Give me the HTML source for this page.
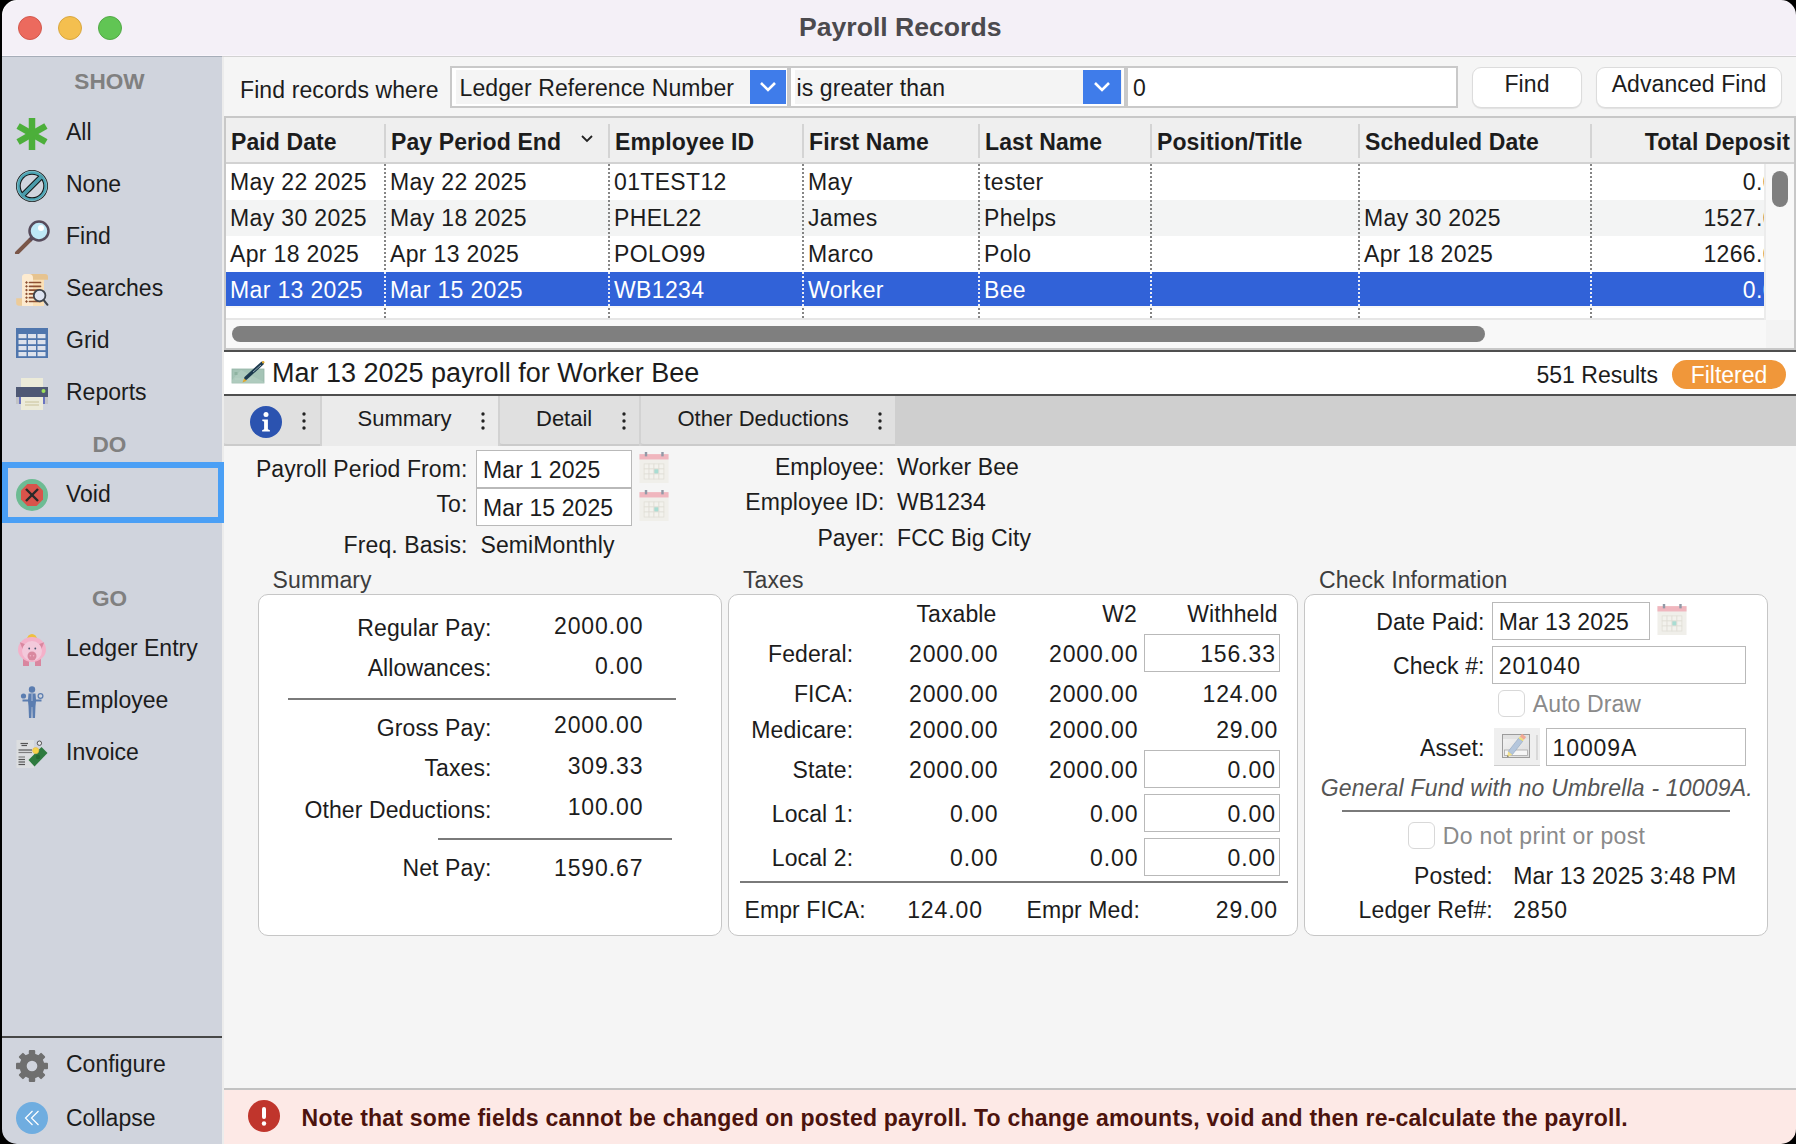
<!DOCTYPE html>
<html><head><meta charset="utf-8">
<style>
*{margin:0;padding:0;box-sizing:border-box}
html,body{width:1796px;height:1144px;overflow:hidden;background:#000}
body{position:relative;font-family:"Liberation Sans",sans-serif;color:#1c1c1c}
.win{position:absolute;left:0;top:0;width:1796px;height:1144px;overflow:hidden;background:#f5f5f5}
.t{position:absolute;white-space:nowrap;font-size:23px;line-height:24.4px;letter-spacing:0.1px}
.r{text-align:right}
.b{font-weight:bold}
.abs{position:absolute}
#titlebar{position:absolute;left:0;top:0;width:1796px;height:56px;z-index:5;background:#f4f0f7;border-bottom:1px solid #faf6fc}
#tline{position:absolute;left:0;top:56px;width:1796px;height:1px;background:#d2d2d2;z-index:5}
#tline2{position:absolute;left:0;top:56px;width:222px;height:1px;background:#a6adb8;z-index:6}
.light{position:absolute;top:16px;width:24px;height:24px;border-radius:50%}
#sidebar{position:absolute;left:0;top:0;width:222px;height:1144px;background:#d0d4dd}
#lstrip{position:absolute;left:0;top:0;width:2px;height:1144px;background:#000;z-index:10}
.sh{position:absolute;left:0;width:219px;text-align:center;font-weight:bold;color:#808080;font-size:22.6px;line-height:22px}
.si{position:absolute;left:66px;font-size:23px;line-height:24.6px;white-space:nowrap;color:#1c1c1c}
.ico{position:absolute;left:14px;width:34px;height:34px}

#main{position:absolute;left:222px;top:57px;width:1574px;height:1087px;background:#f5f5f5;border-left:2px solid #ececec}
.dd{position:absolute;top:66px;height:42px;border:2px solid #c9c9c9;background:#fff}
.dd .in{position:absolute;left:4px;top:2px;right:2px;bottom:2px;background:#f4f4f4}
.dd .bt{position:absolute;top:2px;width:36px;height:34px;background:#3f7cea}
.btn{position:absolute;top:67px;height:41px;background:#fff;border:1px solid #dcdcdc;border-radius:9px;box-shadow:0 1px 1px rgba(0,0,0,0.08)}
.tb{position:absolute;left:224px;top:116px;width:1572px;height:234px;border:2px solid #c8c8c8;border-right:2px solid #c8c8c8;background:#f8f8f8;overflow:hidden}
.hdr{position:absolute;left:0;top:0;width:1570px;height:46px;background:#efefef;border-bottom:2px solid #d2d2d2}
.row{position:absolute;left:0;width:1538px;height:36px;background:#fff;overflow:hidden}
.row .t{letter-spacing:0.35px}
.row.alt{background:#f3f4f4}
.row.sel{background:#3162d8;color:#fff}
.vsep{position:absolute;top:6px;width:2px;height:34px;background:#d4d4d4}
.dsep{position:absolute;top:46px;width:2px;height:156px;background-image:linear-gradient(#777 50%, transparent 50%);background-size:2px 4px;opacity:0.9}

.inp{position:absolute;background:#fff;border:1px solid #b9b9b9}
.grp{position:absolute;top:594px;height:342px;background:#fff;border:1.5px solid #c6c6c6;border-radius:10px}
.gl{color:#3d3d3d}
.cal{position:absolute;width:30px;height:31px}
.cb{position:absolute;width:27px;height:27px;border:1px solid #d8d8d8;border-radius:6px;background:#fff}
.hl{position:absolute;height:2px;background:#7a7a7a}
</style></head>
<body>
<div class="win">
  <div id="lstrip"></div>
<svg class="abs" style="left:0;top:0;z-index:30" width="1796" height="1144" viewBox="0 0 1796 1144">
  <path d="M0,0 L17,0 A15,15 0 0 0 2,15 L2,15 L0,15 Z" fill="#000"/>
  <path d="M17,0.6 A15,15 0 0 0 2.6,15" fill="none" stroke="#fff" stroke-width="1" opacity="0.7"/>
  <path d="M1796,0 L1781,0 A15,15 0 0 1 1796,15 Z" fill="#000"/>
  <path d="M0,1144 L0,1129 L2,1129 A15,15 0 0 0 17,1144 Z" fill="#000"/>
  <path d="M1796,1144 L1796,1129 A15,15 0 0 1 1781,1144 Z" fill="#000"/>
</svg>
  <div id="tline"></div><div id="tline2"></div>
  <div id="titlebar">
    <div class="light" style="left:18px;background:#ec6a5e;border:1px solid #d3584d"></div>
    <div class="light" style="left:58px;background:#f4bf4f;border:1px solid #d9a73f"></div>
    <div class="light" style="left:98px;background:#61c554;border:1px solid #52a947"></div>
    <div class="t b" style="left:799px;top:13.6px;font-size:26.6px;line-height:26.6px;color:#4b4a4e;letter-spacing:0">Payroll Records</div>
  </div>

  <div id="sidebar">
    <div class="sh" style="top:71px">SHOW</div>
    <svg class="abs" style="left:14px;top:116px" width="36" height="36" viewBox="0 0 36 36">
      <g stroke="#4caf3a" stroke-width="6.5" stroke-linecap="butt">
        <line x1="18" y1="2" x2="18" y2="34"/>
        <line x1="4.1" y1="10" x2="31.9" y2="26"/>
        <line x1="4.1" y1="26" x2="31.9" y2="10"/>
      </g>
    </svg>
    <div class="si" style="top:120px">All</div>
    <svg class="abs" style="left:14px;top:168px" width="36" height="36" viewBox="0 0 36 36">
      <defs><clipPath id="cin"><circle cx="18" cy="18" r="12"/></clipPath><clipPath id="cout"><circle cx="18" cy="18" r="14.6"/></clipPath></defs>
      <circle cx="18" cy="18" r="16" fill="#111"/>
      <circle cx="18" cy="18" r="15" fill="#4ea5b5"/>
      <circle cx="18" cy="18" r="15" fill="none" stroke="#bff0f6" stroke-width="0.9" opacity="0.55"/>
      <circle cx="18" cy="18" r="12.3" fill="#111"/>
      <circle cx="18" cy="18" r="11.3" fill="#d0d4dd"/>
      <line x1="5" y1="31" x2="31" y2="5" stroke="#111" stroke-width="5.6" clip-path="url(#cin)"/>
      <line x1="5" y1="31" x2="31" y2="5" stroke="#4a9cab" stroke-width="3.8" clip-path="url(#cout)"/>
    </svg>
    <div class="si" style="top:172px">None</div>
    <svg class="abs" style="left:14px;top:218px" width="36" height="36" viewBox="0 0 36 36">
      <line x1="3" y1="35" x2="16" y2="22" stroke="#7a5648" stroke-width="4" stroke-linecap="round"/>
      <line x1="16" y1="22" x2="19" y2="19" stroke="#5c4a55" stroke-width="4"/>
      <circle cx="25" cy="13" r="9.5" fill="#bfe8f6" stroke="#574c5c" stroke-width="2.5"/>
      <circle cx="27" cy="10" r="3" fill="#fff"/>
    </svg>
    <div class="si" style="top:224px">Find</div>
    <svg class="abs" style="left:14px;top:272px" width="36" height="36" viewBox="0 0 36 36">
      <path d="M8,6 Q8,2 12,2 L30,2 L30,34 L8,34 Z" fill="#fdebd0"/>
      <rect x="19" y="7" width="11" height="27" fill="#fbe0b6"/>
      <path d="M12,2 L31,2 Q34,2 34,5 L34,7.7 L19,7.7 L19,6 Q19,2 15,2 Z" fill="#e6c38f"/>
      <path d="M12,2 Q16.5,2 16.5,6 L16.5,7.7 L8,7.7 L8,6 Q8,2 12,2 Z" fill="#fdebd0"/>
      <path d="M2.2,26.3 L8,26.3 L8,33.8 L5,33.8 Q2.2,33.8 2.2,31 Z" fill="#edcb98"/>
      <rect x="11.5" y="9.5" width="2" height="2" fill="#8c4f32" transform="rotate(45 12.5 10.5)"/><rect x="11.5" y="13.3" width="2" height="2" fill="#8c4f32" transform="rotate(45 12.5 14.3)"/><rect x="11.5" y="17.1" width="2" height="2" fill="#8c4f32" transform="rotate(45 12.5 18.1)"/><rect x="11.5" y="20.9" width="2" height="2" fill="#8c4f32" transform="rotate(45 12.5 21.9)"/><rect x="11.5" y="24.7" width="2" height="2" fill="#8c4f32" transform="rotate(45 12.5 25.7)"/><rect x="11.5" y="28.5" width="2" height="2" fill="#8c4f32" transform="rotate(45 12.5 29.5)"/><line x1="15.5" y1="10.5" x2="26.5" y2="10.5" stroke="#8c4f32" stroke-width="1.7" stroke-linecap="round"/><line x1="15.5" y1="14.3" x2="26.5" y2="14.3" stroke="#8c4f32" stroke-width="1.7" stroke-linecap="round"/><line x1="15.5" y1="18.1" x2="26.5" y2="18.1" stroke="#8c4f32" stroke-width="1.7" stroke-linecap="round"/><line x1="15.5" y1="21.9" x2="26.5" y2="21.9" stroke="#8c4f32" stroke-width="1.7" stroke-linecap="round"/><line x1="15.5" y1="25.7" x2="26.5" y2="25.7" stroke="#8c4f32" stroke-width="1.7" stroke-linecap="round"/><line x1="15.5" y1="29.5" x2="26.5" y2="29.5" stroke="#8c4f32" stroke-width="1.7" stroke-linecap="round"/>
      <circle cx="25.6" cy="23.6" r="5.8" fill="#dde3f0" stroke="#40454d" stroke-width="1.8"/>
      <line x1="29.6" y1="28" x2="33.5" y2="32.8" stroke="#40454d" stroke-width="2" stroke-linecap="round"/>
    </svg>
    <div class="si" style="top:276px">Searches</div>
    <svg class="abs" style="left:14px;top:326px" width="36" height="36" viewBox="0 0 36 36">
      <rect x="2" y="2" width="32" height="30" fill="#4f76ad"/>
      <g fill="#dde2ec">
        <rect x="4.5" y="8" width="8" height="4.2"/><rect x="14" y="8" width="8" height="4.2"/><rect x="23.5" y="8" width="8" height="4.2"/>
        <rect x="4.5" y="14" width="8" height="4.2"/><rect x="14" y="14" width="8" height="4.2"/><rect x="23.5" y="14" width="8" height="4.2"/>
        <rect x="4.5" y="20" width="8" height="4.2"/><rect x="14" y="20" width="8" height="4.2"/><rect x="23.5" y="20" width="8" height="4.2"/>
        <rect x="4.5" y="26" width="8" height="4.2"/><rect x="14" y="26" width="8" height="4.2"/><rect x="23.5" y="26" width="8" height="4.2"/>
      </g>
    </svg>
    <div class="si" style="top:328px">Grid</div>
    <svg class="abs" style="left:14px;top:376px" width="36" height="36" viewBox="0 0 36 36">
      <rect x="7" y="2" width="22" height="10" fill="#ecebd9"/>
      <rect x="2" y="11" width="32" height="10" fill="#4e5874"/>
      <rect x="2" y="21" width="4" height="7" fill="#c2c3c6"/><rect x="30" y="21" width="4" height="7" fill="#c2c3c6"/>
      <rect x="5" y="21" width="2" height="7" fill="#6a74c2"/><rect x="29" y="21" width="2" height="7" fill="#6a74c2"/>
      <rect x="7" y="21" width="22" height="13" fill="#ecebd9"/>
      <line x1="11" y1="26" x2="25" y2="26" stroke="#c9c29a" stroke-width="1"/>
      <line x1="11" y1="29" x2="25" y2="29" stroke="#c9c29a" stroke-width="1"/>
      <circle cx="29.5" cy="15" r="2" fill="#9ee05a"/>
    </svg>
    <div class="si" style="top:380px">Reports</div>
    <div class="sh" style="top:434px">DO</div>
    <div class="abs" style="left:2px;top:462px;width:222px;height:61px;border:6px solid #4a9ff5;z-index:4"></div>
    <svg class="abs" style="left:14px;top:477px" width="36" height="36" viewBox="0 0 36 36">
      <circle cx="18" cy="18" r="16" fill="#6dbb93"/>
      <polygon points="13.4,7 22.6,7 29,13.4 29,22.6 22.6,29 13.4,29 7,22.6 7,13.4" fill="#d9534b"/>
      <g stroke="#2a2a2a" stroke-width="2.4"><line x1="12" y1="12" x2="24" y2="24"/><line x1="24" y1="12" x2="12" y2="24"/></g>
    </svg>
    <div class="si" style="top:482px">Void</div>
    <div class="sh" style="top:588px">GO</div>
    <svg class="abs" style="left:14px;top:632px" width="36" height="36" viewBox="0 0 36 36">
      <path d="M13,7.5 A5,5.5 0 0 1 23,7.5 Z" fill="#eec040"/>
      <rect x="9" y="26" width="6" height="8" fill="#d9869f"/><rect x="21" y="26" width="6" height="8" fill="#d9869f"/>
      <ellipse cx="18" cy="17.5" rx="14" ry="12.5" fill="#f4b1c9"/>
      <polygon points="5.8,10.2 12,12.5 8.5,17" fill="#d9879f"/><polygon points="30.2,10.2 24,12.5 27.5,17" fill="#d9879f"/>
      <circle cx="18" cy="19" r="10" fill="#f3c9db"/>
      <circle cx="18" cy="24" r="4.5" fill="#d9889f"/>
      <circle cx="16.4" cy="23.7" r="0.8" fill="#f0b0c4"/><circle cx="19.6" cy="23.7" r="0.8" fill="#f0b0c4"/>
      <circle cx="15.2" cy="16.5" r="0.9" fill="#4d5570"/><circle cx="21.3" cy="16.5" r="0.9" fill="#4d5570"/>
    </svg>
    <div class="si" style="top:636px">Ledger Entry</div>
    <svg class="abs" style="left:14px;top:683px" width="36" height="36" viewBox="0 0 36 36">
      <g fill="#5b7db0">
        <circle cx="18" cy="6.5" r="3.2"/>
        <path d="M14.5,10.5 L21.5,10.5 L22,16.5 L27.5,16.5 L27.5,18.5 L22,18.5 L21.5,23 L21,35 L18.6,35 L18.3,24 L17.7,24 L17.4,35 L15,35 L14.5,23 L14,18.5 L8.5,18.5 L8.5,16.5 L14,16.5 Z"/>
        <circle cx="9.5" cy="13" r="2.6"/>
      </g>
      <circle cx="26.5" cy="13" r="2.4" fill="none" stroke="#5b7db0" stroke-width="1.2"/>
      <line x1="18" y1="11" x2="18" y2="18" stroke="#c8d2e6" stroke-width="0.8"/>
    </svg>
    <div class="si" style="top:688px">Employee</div>
    <svg class="abs" style="left:14px;top:734px" width="36" height="36" viewBox="0 0 36 36">
      <rect x="2.5" y="6" width="17.5" height="28" fill="#dcdee0"/>
      <g stroke="#555" stroke-width="1.2">
        <line x1="6.5" y1="9.5" x2="14" y2="9.5"/><line x1="7.5" y1="11.5" x2="13" y2="11.5"/><line x1="4.5" y1="16" x2="18" y2="16"/><line x1="4.5" y1="18.5" x2="18" y2="18.5" opacity="0.7"/>
        <line x1="4.5" y1="23" x2="11" y2="23" opacity="0.7"/><line x1="4.5" y1="25.5" x2="11" y2="25.5"/><line x1="4.5" y1="28" x2="11" y2="28"/><line x1="4.5" y1="30.5" x2="11" y2="30.5"/>
      </g>
      <polygon points="14.5,26 27.5,13 33.5,19 20.5,32.5" fill="#2e7a3e"/>
      <circle cx="24" cy="23" r="2.2" fill="#256a32"/>
      <circle cx="21.7" cy="16.6" r="3.1" fill="#f6d448" stroke="#e8b84a" stroke-width="0.6"/>
      <circle cx="25.4" cy="9.2" r="2.2" fill="#e8e8e8" stroke="#555" stroke-width="1"/>
    </svg>
    <div class="si" style="top:740px">Invoice</div>
    <div class="abs" style="left:0;top:1036px;width:222px;height:2px;background:#474747"></div>
    <svg class="abs" style="left:14px;top:1048px" width="36" height="36" viewBox="0 0 36 36">
      <g fill="#6f6f6f" transform="translate(18,18)">
        <circle r="12.5"/>
        <rect x="-3.2" y="-16" width="6.4" height="32" rx="1"/>
        <rect x="-3.2" y="-16" width="6.4" height="32" rx="1" transform="rotate(45)"/>
        <rect x="-3.2" y="-16" width="6.4" height="32" rx="1" transform="rotate(90)"/>
        <rect x="-3.2" y="-16" width="6.4" height="32" rx="1" transform="rotate(135)"/>
      </g>
      <circle cx="18" cy="18" r="5.3" fill="#d0d4dd"/>
    </svg>
    <div class="si" style="top:1052px">Configure</div>
    <svg class="abs" style="left:14px;top:1100px" width="36" height="36" viewBox="0 0 36 36">
      <circle cx="18" cy="18" r="16" fill="#6fade0"/>
      <g fill="none" stroke="#fff" stroke-width="1.2"><polyline points="18.5,11 11.5,18 18.5,25"/><polyline points="24.5,11 17.5,18 24.5,25"/></g>
    </svg>
    <div class="si" style="top:1106px">Collapse</div>
  </div>


  <div id="main"></div>
  <div class="t" style="left:240px;top:77.5px">Find records where</div>
  <div class="dd" style="left:450px;width:339px"><div class="in"></div><div class="bt" style="left:298px"></div></div>
  <div class="t" style="left:459.5px;top:75.5px">Ledger Reference Number</div>
  <svg class="abs" style="left:758px;top:80px" width="20" height="14" viewBox="0 0 20 14"><polyline points="3,3 10,10 17,3" fill="none" stroke="#fff" stroke-width="2.6"/></svg>
  <div class="dd" style="left:789px;width:337px"><div class="in"></div><div class="bt" style="left:292px;width:38px"></div></div>
  <div class="t" style="left:796.5px;top:75.5px">is greater than</div>
  <svg class="abs" style="left:1092px;top:80px" width="20" height="14" viewBox="0 0 20 14"><polyline points="3,3 10,10 17,3" fill="none" stroke="#fff" stroke-width="2.6"/></svg>
  <div class="abs" style="left:1126px;top:66px;width:332px;height:42px;border:2px solid #c9c9c9;background:#fff"></div>
  <div class="t" style="left:1133px;top:75.5px">0</div>
  <div class="btn" style="left:1472px;width:110px"></div>
  <div class="t" style="left:1472px;width:110px;text-align:center;top:71.5px">Find</div>
  <div class="btn" style="left:1596px;width:186px"></div>
  <div class="t" style="left:1596px;width:186px;text-align:center;top:71.5px">Advanced Find</div>

  <div class="tb">
    <div class="hdr">
      <div class="t b" style="left:5px;top:11.9px">Paid Date</div>
      <div class="vsep" style="left:158px"></div>
      <div class="t b" style="left:165px;top:11.9px">Pay Period End</div>
      <svg class="abs" style="left:354px;top:16px" width="14" height="10" viewBox="0 0 14 10"><polyline points="2,2 7,7 12,2" fill="none" stroke="#222" stroke-width="1.8"/></svg>
      <div class="vsep" style="left:382px"></div>
      <div class="t b" style="left:389px;top:11.9px">Employee ID</div>
      <div class="vsep" style="left:576px"></div>
      <div class="t b" style="left:583px;top:11.9px">First Name</div>
      <div class="vsep" style="left:752px"></div>
      <div class="t b" style="left:759px;top:11.9px">Last Name</div>
      <div class="vsep" style="left:924px"></div>
      <div class="t b" style="left:931px;top:11.9px">Position/Title</div>
      <div class="vsep" style="left:1132px"></div>
      <div class="t b" style="left:1139px;top:11.9px">Scheduled Date</div>
      <div class="vsep" style="left:1364px"></div>
      <div class="t b r" style="right:6px;top:11.9px">Total Deposit</div>
    </div>
    <div class="row " style="top:46px;height:36px"><div class="t" style="left:4px;top:5.9px">May 22 2025</div><div class="t" style="left:164px;top:5.9px">May 22 2025</div><div class="t" style="left:388px;top:5.9px">01TEST12</div><div class="t" style="left:582px;top:5.9px">May</div><div class="t" style="left:758px;top:5.9px">tester</div><div class="t r" style="left:1363px;width:200px;top:5.9px">0.00</div></div>
    <div class="row alt" style="top:82px;height:36px"><div class="t" style="left:4px;top:5.9px">May 30 2025</div><div class="t" style="left:164px;top:5.9px">May 18 2025</div><div class="t" style="left:388px;top:5.9px">PHEL22</div><div class="t" style="left:582px;top:5.9px">James</div><div class="t" style="left:758px;top:5.9px">Phelps</div><div class="t" style="left:1138px;top:5.9px">May 30 2025</div><div class="t r" style="left:1363px;width:200px;top:5.9px">1527.00</div></div>
    <div class="row " style="top:118px;height:36px"><div class="t" style="left:4px;top:5.9px">Apr 18 2025</div><div class="t" style="left:164px;top:5.9px">Apr 13 2025</div><div class="t" style="left:388px;top:5.9px">POLO99</div><div class="t" style="left:582px;top:5.9px">Marco</div><div class="t" style="left:758px;top:5.9px">Polo</div><div class="t" style="left:1138px;top:5.9px">Apr 18 2025</div><div class="t r" style="left:1363px;width:200px;top:5.9px">1266.00</div></div>
    <div class="row sel" style="top:154px;height:34px"><div class="t" style="left:4px;top:5.9px">Mar 13 2025</div><div class="t" style="left:164px;top:5.9px">Mar 15 2025</div><div class="t" style="left:388px;top:5.9px">WB1234</div><div class="t" style="left:582px;top:5.9px">Worker</div><div class="t" style="left:758px;top:5.9px">Bee</div><div class="t r" style="left:1363px;width:200px;top:5.9px">0.00</div></div>
    <div class="row" style="top:190px;height:12px"></div>

    <div class="abs" style="left:0;top:200px;width:1538px;height:2px;background:#e6e6e6"></div>
    <div class="dsep" style="left:158px"></div>
    <div class="dsep" style="left:382px"></div>
    <div class="dsep" style="left:576px"></div>
    <div class="dsep" style="left:752px"></div>
    <div class="dsep" style="left:924px"></div>
    <div class="dsep" style="left:1132px"></div>
    <div class="dsep" style="left:1364px"></div>
    <div class="abs" style="left:158px;top:154px;width:2px;height:34px;background-image:linear-gradient(#e8ecf8 50%, transparent 50%);background-size:2px 4px"></div>
    <div class="abs" style="left:382px;top:154px;width:2px;height:34px;background-image:linear-gradient(#e8ecf8 50%, transparent 50%);background-size:2px 4px"></div>
    <div class="abs" style="left:576px;top:154px;width:2px;height:34px;background-image:linear-gradient(#e8ecf8 50%, transparent 50%);background-size:2px 4px"></div>
    <div class="abs" style="left:752px;top:154px;width:2px;height:34px;background-image:linear-gradient(#e8ecf8 50%, transparent 50%);background-size:2px 4px"></div>
    <div class="abs" style="left:924px;top:154px;width:2px;height:34px;background-image:linear-gradient(#e8ecf8 50%, transparent 50%);background-size:2px 4px"></div>
    <div class="abs" style="left:1132px;top:154px;width:2px;height:34px;background-image:linear-gradient(#e8ecf8 50%, transparent 50%);background-size:2px 4px"></div>
    <div class="abs" style="left:1364px;top:154px;width:2px;height:34px;background-image:linear-gradient(#e8ecf8 50%, transparent 50%);background-size:2px 4px"></div>
    <div class="abs" style="left:1538px;top:46px;width:2px;height:156px;background:#ececec"></div>
    <div class="abs" style="left:1540px;top:202px;width:30px;height:28px;background:#f3f3f3"></div>
    <div class="abs" style="left:1546px;top:53px;width:16px;height:36px;border-radius:8px;background:#7f7f7f"></div>
    <div class="abs" style="left:6px;top:208px;width:1253px;height:16px;border-radius:8px;background:#7f7f7f"></div>
  </div>


<div class="abs" style="left:224px;top:350px;width:1572px;height:2px;background:#4f4f4f"></div>
<div class="abs" style="left:224px;top:352px;width:1572px;height:42px;background:#fff"></div>
<div class="abs" style="left:224px;top:394px;width:1572px;height:2px;background:#4f4f4f"></div>
<svg class="abs" style="left:231px;top:360px" width="34" height="26" viewBox="0 0 34 26"><rect x="1" y="9" width="32" height="14" fill="#a5c4b6" stroke="#93b5a5" stroke-width="0.8"/><polygon points="10,10 33,22 33,23 1,23 1,20" fill="#b5d0c3" opacity="0.6"/><rect x="3.5" y="12" width="3" height="3" fill="#8fb3a1"/><line x1="4" y1="19" x2="20" y2="19" stroke="#b9d3c6" stroke-width="1"/><line x1="15" y1="18" x2="31" y2="3.5" stroke="#1d3a4e" stroke-width="3.6" stroke-linecap="round"/><line x1="22" y1="12" x2="30" y2="5" stroke="#a9c0c8" stroke-width="0.8"/><polygon points="13,18.5 15.8,20.8 11.5,22.5" fill="#e0a92e"/><circle cx="32.2" cy="2.3" r="1.2" fill="#e0a92e"/></svg>
<div class="t" style="left:272px;top:360.1px;letter-spacing:0;font-size:27px;line-height:27px">Mar 13 2025 payroll for Worker Bee</div>
<div class="t r" style="left:1258.0px;width:400px;top:362.9px;letter-spacing:0">551 Results</div>
<div class="abs" style="left:1672px;top:360px;width:114px;height:29px;border-radius:14.5px;background:#f0973a"></div>
<div class="t" style="left:1672px;width:114px;text-align:center;top:362.5px;color:#fff;letter-spacing:0">Filtered</div>
<div class="abs" style="left:224px;top:396px;width:1572px;height:50px;background:#cfcfcf"></div>
<div class="abs" style="left:224px;top:396px;width:96px;height:50px;background:#e0e0e0;border-bottom:2px solid #cbcbcb;border-bottom-left-radius:3px"></div>
<div class="abs" style="left:322px;top:396px;width:176px;height:50px;background:#ebebeb"></div>
<div class="abs" style="left:500px;top:396px;width:139px;height:50px;background:#e0e0e0;border-bottom:2px solid #cbcbcb;border-bottom-left-radius:3px"></div>
<div class="abs" style="left:641px;top:396px;width:254px;height:50px;background:#e0e0e0;border-bottom:2px solid #cbcbcb;border-bottom-left-radius:3px"></div>
<div class="abs" style="left:320px;top:396px;width:2px;height:50px;background:#d2d2d2"></div>
<div class="abs" style="left:498px;top:396px;width:2px;height:50px;background:#d2d2d2"></div>
<div class="abs" style="left:639px;top:396px;width:2px;height:50px;background:#d2d2d2"></div>
<svg class="abs" style="left:250px;top:406px" width="32" height="32" viewBox="0 0 32 32"><circle cx="16" cy="16" r="16" fill="#2b53b0"/><circle cx="16" cy="8.6" r="2.5" fill="#fff"/><path d="M12.3,13.4 L17.9,13.4 L17.9,23.2 L19.9,24.3 L19.9,25.5 L12.1,25.5 L12.1,24.3 L14.1,23.2 L14.1,15.4 L12.3,15.0 Z" fill="#fff"/></svg>
<svg class="abs" style="left:302px;top:411px" width="4" height="20" viewBox="0 0 4 20"><circle cx="2" cy="3" r="1.7" fill="#222"/><circle cx="2" cy="10" r="1.7" fill="#222"/><circle cx="2" cy="17" r="1.7" fill="#222"/></svg>
<svg class="abs" style="left:481px;top:411px" width="4" height="20" viewBox="0 0 4 20"><circle cx="2" cy="3" r="1.7" fill="#222"/><circle cx="2" cy="10" r="1.7" fill="#222"/><circle cx="2" cy="17" r="1.7" fill="#222"/></svg>
<svg class="abs" style="left:622px;top:411px" width="4" height="20" viewBox="0 0 4 20"><circle cx="2" cy="3" r="1.7" fill="#222"/><circle cx="2" cy="10" r="1.7" fill="#222"/><circle cx="2" cy="17" r="1.7" fill="#222"/></svg>
<svg class="abs" style="left:878px;top:411px" width="4" height="20" viewBox="0 0 4 20"><circle cx="2" cy="3" r="1.7" fill="#222"/><circle cx="2" cy="10" r="1.7" fill="#222"/><circle cx="2" cy="17" r="1.7" fill="#222"/></svg>
<div class="t" style="left:357.5px;top:408.0px;font-size:22px;line-height:22px;letter-spacing:0">Summary</div>
<div class="t" style="left:536px;top:408.0px;font-size:22px;line-height:22px;letter-spacing:0">Detail</div>
<div class="t" style="left:677.5px;top:408.0px;font-size:22px;line-height:22px;letter-spacing:0">Other Deductions</div>
<div class="t r" style="left:67.5px;width:400px;top:456.8px;">Payroll Period From:</div>
<div class="inp" style="left:476px;top:450px;width:156px;height:38px"></div>
<div class="t" style="left:483px;top:458.4px;">Mar 1 2025</div>
<svg class="cal" style="left:639px;top:452px" width="30" height="32" viewBox="0 0 30 32"><rect x="0" y="2.2" width="30" height="29.8" fill="#f0efea"/><rect x="0" y="2.2" width="30" height="5.5" fill="#f0b6be"/><rect x="5.5" y="0" width="2.5" height="4.5" fill="#9199a6"/><rect x="22.5" y="0" width="2.5" height="4.5" fill="#9199a6"/><rect x="4.8" y="12.3" width="5.1" height="5.2" fill="#f3f2ed" stroke="#e0ded6" stroke-width="0.8"/><rect x="9.9" y="12.3" width="5.1" height="5.2" fill="#f3f2ed" stroke="#e0ded6" stroke-width="0.8"/><rect x="15.0" y="12.3" width="5.1" height="5.2" fill="#f3f2ed" stroke="#e0ded6" stroke-width="0.8"/><rect x="20.1" y="12.3" width="5.1" height="5.2" fill="#f3f2ed" stroke="#e0ded6" stroke-width="0.8"/><rect x="4.8" y="17.5" width="5.1" height="5.2" fill="#f3f2ed" stroke="#e0ded6" stroke-width="0.8"/><rect x="9.9" y="17.5" width="5.1" height="5.2" fill="#f3f2ed" stroke="#e0ded6" stroke-width="0.8"/><rect x="15.0" y="17.5" width="5.1" height="5.2" fill="#a9ddd3" stroke="#e0ded6" stroke-width="0.8"/><rect x="20.1" y="17.5" width="5.1" height="5.2" fill="#f3f2ed" stroke="#e0ded6" stroke-width="0.8"/><rect x="4.8" y="22.7" width="5.1" height="5.2" fill="#f3f2ed" stroke="#e0ded6" stroke-width="0.8"/><rect x="9.9" y="22.7" width="5.1" height="5.2" fill="#f3f2ed" stroke="#e0ded6" stroke-width="0.8"/><rect x="15.0" y="22.7" width="5.1" height="5.2" fill="#f3f2ed" stroke="#e0ded6" stroke-width="0.8"/><rect x="20.1" y="22.7" width="5.1" height="5.2" fill="#f3f2ed" stroke="#e0ded6" stroke-width="0.8"/></svg>
<div class="t r" style="left:67.5px;width:400px;top:491.9px;">To:</div>
<div class="inp" style="left:476px;top:488px;width:156px;height:38px"></div>
<div class="t" style="left:483px;top:496.4px;">Mar 15 2025</div>
<svg class="cal" style="left:639px;top:490px" width="30" height="32" viewBox="0 0 30 32"><rect x="0" y="2.2" width="30" height="29.8" fill="#f0efea"/><rect x="0" y="2.2" width="30" height="5.5" fill="#f0b6be"/><rect x="5.5" y="0" width="2.5" height="4.5" fill="#9199a6"/><rect x="22.5" y="0" width="2.5" height="4.5" fill="#9199a6"/><rect x="4.8" y="12.3" width="5.1" height="5.2" fill="#f3f2ed" stroke="#e0ded6" stroke-width="0.8"/><rect x="9.9" y="12.3" width="5.1" height="5.2" fill="#f3f2ed" stroke="#e0ded6" stroke-width="0.8"/><rect x="15.0" y="12.3" width="5.1" height="5.2" fill="#f3f2ed" stroke="#e0ded6" stroke-width="0.8"/><rect x="20.1" y="12.3" width="5.1" height="5.2" fill="#f3f2ed" stroke="#e0ded6" stroke-width="0.8"/><rect x="4.8" y="17.5" width="5.1" height="5.2" fill="#f3f2ed" stroke="#e0ded6" stroke-width="0.8"/><rect x="9.9" y="17.5" width="5.1" height="5.2" fill="#f3f2ed" stroke="#e0ded6" stroke-width="0.8"/><rect x="15.0" y="17.5" width="5.1" height="5.2" fill="#a9ddd3" stroke="#e0ded6" stroke-width="0.8"/><rect x="20.1" y="17.5" width="5.1" height="5.2" fill="#f3f2ed" stroke="#e0ded6" stroke-width="0.8"/><rect x="4.8" y="22.7" width="5.1" height="5.2" fill="#f3f2ed" stroke="#e0ded6" stroke-width="0.8"/><rect x="9.9" y="22.7" width="5.1" height="5.2" fill="#f3f2ed" stroke="#e0ded6" stroke-width="0.8"/><rect x="15.0" y="22.7" width="5.1" height="5.2" fill="#f3f2ed" stroke="#e0ded6" stroke-width="0.8"/><rect x="20.1" y="22.7" width="5.1" height="5.2" fill="#f3f2ed" stroke="#e0ded6" stroke-width="0.8"/></svg>
<div class="t r" style="left:67.5px;width:400px;top:532.8px;">Freq. Basis:</div>
<div class="t" style="left:480.5px;top:532.8px;">SemiMonthly</div>
<div class="t r" style="left:484.5px;width:400px;top:454.8px;">Employee:</div>
<div class="t" style="left:897px;top:454.8px;">Worker Bee</div>
<div class="t r" style="left:484.5px;width:400px;top:489.9px;">Employee ID:</div>
<div class="t" style="left:897px;top:489.9px;">WB1234</div>
<div class="t r" style="left:484.5px;width:400px;top:525.8px;">Payer:</div>
<div class="t" style="left:897px;top:525.8px;">FCC Big City</div>
<div class="t" style="left:272.6px;top:568.4px;color:#3d3d3d">Summary</div>
<div class="t" style="left:743px;top:568.4px;color:#3d3d3d">Taxes</div>
<div class="t" style="left:1319px;top:567.7px;color:#3d3d3d">Check Information</div>
<div class="grp" style="left:258px;width:464px"></div>
<div class="grp" style="left:728px;width:570px"></div>
<div class="grp" style="left:1304px;width:464px"></div>
<div class="t r" style="left:91.5px;width:400px;top:616.1px;">Regular Pay:</div>
<div class="t r" style="left:243.4px;width:400px;top:613.7px;letter-spacing:0.9px;">2000.00</div>
<div class="t r" style="left:91.5px;width:400px;top:656.3px;">Allowances:</div>
<div class="t r" style="left:243.4px;width:400px;top:653.9px;letter-spacing:0.9px;">0.00</div>
<div class="t r" style="left:91.5px;width:400px;top:715.9px;">Gross Pay:</div>
<div class="t r" style="left:243.4px;width:400px;top:713.4px;letter-spacing:0.9px;">2000.00</div>
<div class="t r" style="left:91.5px;width:400px;top:756.1px;">Taxes:</div>
<div class="t r" style="left:243.4px;width:400px;top:753.9px;letter-spacing:0.9px;">309.33</div>
<div class="t r" style="left:91.5px;width:400px;top:797.7px;">Other Deductions:</div>
<div class="t r" style="left:243.4px;width:400px;top:795.4px;letter-spacing:0.9px;">100.00</div>
<div class="t r" style="left:91.5px;width:400px;top:856.4px;">Net Pay:</div>
<div class="t r" style="left:243.4px;width:400px;top:855.7px;letter-spacing:0.9px;">1590.67</div>
<div class="hl" style="left:288px;top:698px;width:388px"></div>
<div class="hl" style="left:438px;top:838px;width:234px"></div>
<div class="t r" style="left:596.4px;width:400px;top:602.4px;">Taxable</div>
<div class="t r" style="left:737.0px;width:400px;top:602.4px;">W2</div>
<div class="t r" style="left:877.6px;width:400px;top:602.4px;">Withheld</div>
<div class="t r" style="left:453.2px;width:400px;top:642.0px;">Federal:</div>
<div class="t r" style="left:598.4px;width:400px;top:642.0px;letter-spacing:0.9px;">2000.00</div>
<div class="t r" style="left:738.4px;width:400px;top:642.0px;letter-spacing:0.9px;">2000.00</div>
<div class="inp" style="left:1144px;top:634px;width:136px;height:38px"></div>
<div class="t r" style="left:875.9px;width:400px;top:642.0px;letter-spacing:0.9px;">156.33</div>
<div class="t r" style="left:453.2px;width:400px;top:681.8px;">FICA:</div>
<div class="t r" style="left:598.4px;width:400px;top:681.8px;letter-spacing:0.9px;">2000.00</div>
<div class="t r" style="left:738.4px;width:400px;top:681.8px;letter-spacing:0.9px;">2000.00</div>
<div class="t r" style="left:878.2px;width:400px;top:681.8px;letter-spacing:0.9px;">124.00</div>
<div class="t r" style="left:453.2px;width:400px;top:718.4px;">Medicare:</div>
<div class="t r" style="left:598.4px;width:400px;top:718.4px;letter-spacing:0.9px;">2000.00</div>
<div class="t r" style="left:738.4px;width:400px;top:718.4px;letter-spacing:0.9px;">2000.00</div>
<div class="t r" style="left:878.2px;width:400px;top:718.4px;letter-spacing:0.9px;">29.00</div>
<div class="t r" style="left:453.2px;width:400px;top:757.9px;">State:</div>
<div class="t r" style="left:598.4px;width:400px;top:757.9px;letter-spacing:0.9px;">2000.00</div>
<div class="t r" style="left:738.4px;width:400px;top:757.9px;letter-spacing:0.9px;">2000.00</div>
<div class="inp" style="left:1144px;top:750px;width:136px;height:38px"></div>
<div class="t r" style="left:875.9px;width:400px;top:757.9px;letter-spacing:0.9px;">0.00</div>
<div class="t r" style="left:453.2px;width:400px;top:802.2px;">Local 1:</div>
<div class="t r" style="left:598.4px;width:400px;top:802.2px;letter-spacing:0.9px;">0.00</div>
<div class="t r" style="left:738.4px;width:400px;top:802.2px;letter-spacing:0.9px;">0.00</div>
<div class="inp" style="left:1144px;top:794px;width:136px;height:38px"></div>
<div class="t r" style="left:875.9px;width:400px;top:802.2px;letter-spacing:0.9px;">0.00</div>
<div class="t r" style="left:453.2px;width:400px;top:846.1px;">Local 2:</div>
<div class="t r" style="left:598.4px;width:400px;top:846.1px;letter-spacing:0.9px;">0.00</div>
<div class="t r" style="left:738.4px;width:400px;top:846.1px;letter-spacing:0.9px;">0.00</div>
<div class="inp" style="left:1144px;top:838px;width:136px;height:38px"></div>
<div class="t r" style="left:875.9px;width:400px;top:846.1px;letter-spacing:0.9px;">0.00</div>
<div class="hl" style="left:740px;top:881px;width:548px"></div>
<div class="t" style="left:744.5px;top:898.3px;">Empr FICA:</div>
<div class="t r" style="left:582.9px;width:400px;top:898.3px;letter-spacing:0.9px;">124.00</div>
<div class="t" style="left:1026.5px;top:898.3px;">Empr Med:</div>
<div class="t r" style="left:877.9px;width:400px;top:898.3px;letter-spacing:0.9px;">29.00</div>
<div class="t r" style="left:1084.6px;width:400px;top:610.4px;">Date Paid:</div>
<div class="inp" style="left:1492px;top:602px;width:158px;height:38px"></div>
<div class="t" style="left:1498.7px;top:610.4px;">Mar 13 2025</div>
<svg class="cal" style="left:1657px;top:604px" width="30" height="32" viewBox="0 0 30 32"><rect x="0" y="2.2" width="30" height="29.8" fill="#f0efea"/><rect x="0" y="2.2" width="30" height="5.5" fill="#f0b6be"/><rect x="5.5" y="0" width="2.5" height="4.5" fill="#9199a6"/><rect x="22.5" y="0" width="2.5" height="4.5" fill="#9199a6"/><rect x="4.8" y="12.3" width="5.1" height="5.2" fill="#f3f2ed" stroke="#e0ded6" stroke-width="0.8"/><rect x="9.9" y="12.3" width="5.1" height="5.2" fill="#f3f2ed" stroke="#e0ded6" stroke-width="0.8"/><rect x="15.0" y="12.3" width="5.1" height="5.2" fill="#f3f2ed" stroke="#e0ded6" stroke-width="0.8"/><rect x="20.1" y="12.3" width="5.1" height="5.2" fill="#f3f2ed" stroke="#e0ded6" stroke-width="0.8"/><rect x="4.8" y="17.5" width="5.1" height="5.2" fill="#f3f2ed" stroke="#e0ded6" stroke-width="0.8"/><rect x="9.9" y="17.5" width="5.1" height="5.2" fill="#f3f2ed" stroke="#e0ded6" stroke-width="0.8"/><rect x="15.0" y="17.5" width="5.1" height="5.2" fill="#a9ddd3" stroke="#e0ded6" stroke-width="0.8"/><rect x="20.1" y="17.5" width="5.1" height="5.2" fill="#f3f2ed" stroke="#e0ded6" stroke-width="0.8"/><rect x="4.8" y="22.7" width="5.1" height="5.2" fill="#f3f2ed" stroke="#e0ded6" stroke-width="0.8"/><rect x="9.9" y="22.7" width="5.1" height="5.2" fill="#f3f2ed" stroke="#e0ded6" stroke-width="0.8"/><rect x="15.0" y="22.7" width="5.1" height="5.2" fill="#f3f2ed" stroke="#e0ded6" stroke-width="0.8"/><rect x="20.1" y="22.7" width="5.1" height="5.2" fill="#f3f2ed" stroke="#e0ded6" stroke-width="0.8"/></svg>
<div class="t r" style="left:1084.6px;width:400px;top:653.9px;">Check #:</div>
<div class="inp" style="left:1492px;top:646px;width:254px;height:38px"></div>
<div class="t" style="left:1498.7px;top:653.9px;letter-spacing:0.9px;">201040</div>
<div class="cb" style="left:1498px;top:690px"></div>
<div class="t" style="left:1532.8px;top:692.1px;color:#8a8a8a">Auto Draw</div>
<div class="t r" style="left:1084.6px;width:400px;top:735.8px;">Asset:</div>
<div class="abs" style="left:1494px;top:728px;width:46px;height:38px;background:#efefef;border-bottom:1.5px solid #cdcdcd"></div><svg class="abs" style="left:1500px;top:732px" width="40" height="32" viewBox="0 0 40 32"><defs><linearGradient id="fg" x1="0" y1="0" x2="1" y2="1"><stop offset="0" stop-color="#f4f4f4"/><stop offset="1" stop-color="#dcdcdc"/></linearGradient></defs><rect x="2.5" y="2.5" width="27" height="23" fill="url(#fg)" stroke="#9c9c9c" stroke-width="1"/><rect x="3" y="3" width="26" height="4" fill="#e2e2e2"/><rect x="4.5" y="18" width="23" height="5.5" fill="#f6f6f6" stroke="#a8a8a8" stroke-width="0.8"/><line x1="37" y1="3" x2="37" y2="28" stroke="#c9c9c9" stroke-width="1.2"/><g transform="translate(17,12.5) rotate(-52)"><rect x="-11" y="-2.6" width="17" height="5.2" fill="#b4c6dc" stroke="#8aa0bc" stroke-width="0.5"/><rect x="6" y="-2.6" width="2" height="5.2" fill="#efe07a"/><rect x="8" y="-2.6" width="3.5" height="5.2" fill="#f0a894"/><polygon points="-11,-2.6 -16,0 -11,2.6" fill="#f2e08a"/><polygon points="-14.2,-0.9 -16,0 -14.2,0.9" fill="#555"/></g></svg>
<div class="inp" style="left:1546px;top:728px;width:200px;height:38px"></div>
<div class="t" style="left:1552.5px;top:735.8px;letter-spacing:0.9px;">10009A</div>
<div class="t" style="left:1320.7px;top:775.7px;font-style:italic;color:#555;letter-spacing:0.2px">General Fund with no Umbrella - 10009A.</div>
<div class="hl" style="left:1342px;top:810px;width:388px"></div>
<div class="cb" style="left:1408px;top:822px"></div>
<div class="t" style="left:1442.7px;top:824.1px;color:#8a8a8a;letter-spacing:0.35px">Do not print or post</div>
<div class="t r" style="left:1092.8px;width:400px;top:863.6px;">Posted:</div>
<div class="t" style="left:1513.3px;top:863.6px;">Mar 13 2025 3:48 PM</div>
<div class="t r" style="left:1092.8px;width:400px;top:897.7px;">Ledger Ref#:</div>
<div class="t" style="left:1513.3px;top:897.7px;letter-spacing:0.9px;">2850</div>
<div class="abs" style="left:224px;top:1088px;width:1572px;height:2px;background:#c2c2c2"></div>
<div class="abs" style="left:224px;top:1090px;width:1572px;height:54px;background:#fde9e6"></div>
<svg class="abs" style="left:248px;top:1100px" width="32" height="32" viewBox="0 0 32 32"><circle cx="16" cy="16" r="16" fill="#c0352c"/><rect x="14" y="7" width="4" height="12" rx="2" fill="#fff"/><circle cx="16" cy="23.5" r="2.2" fill="#fff"/></svg>
<div class="t" style="left:301.6px;top:1106.3px;font-weight:bold;color:#4c130d;letter-spacing:0.22px">Note that some fields cannot be changed on posted payroll. To change amounts, void and then re-calculate the payroll.</div>
</div>
</body></html>
